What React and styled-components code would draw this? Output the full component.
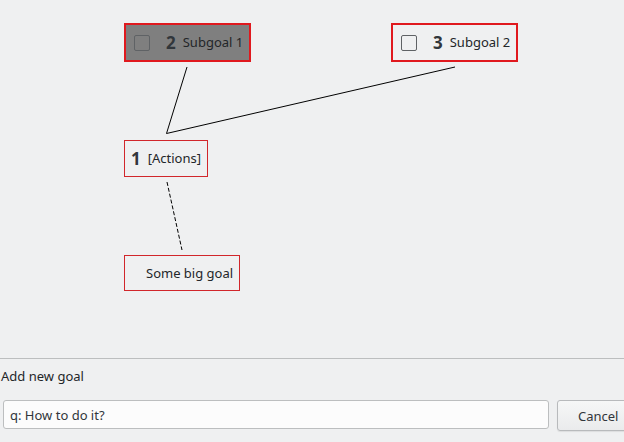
import React from "react";
import styled, { createGlobalStyle } from "styled-components";

const Global = createGlobalStyle`
  html, body { margin: 0; padding: 0; background: #eff0f1; }
  body { font-family: "Noto Sans", "Open Sans", sans-serif; color: #31363b; overflow: hidden; }
  * { box-sizing: border-box; }
`;

const Page = styled.div`
  width: 624px;
  height: 442px;
  display: flex;
  flex-direction: column;
  background: #eff0f1;
  overflow: hidden;
`;

const Canvas = styled.div`
  position: relative;
  height: 359px;
  flex: none;
  border-bottom: 1px solid #bcbebf;
`;

const Edges = styled.svg`
  position: absolute;
  left: 0;
  top: 0;
  width: 624px;
  height: 358px;
`;

const Node = styled.div`
  position: absolute;
  left: ${(p) => p.$x}px;
  top: ${(p) => p.$y}px;
  width: ${(p) => p.$w}px;
  height: ${(p) => p.$h}px;
  border: ${(p) => (p.$thick ? 2 : 1)}px solid ${(p) => (p.$thick ? "#e0191e" : "#d1262b")};
  background: ${(p) => (p.$selected ? "#7f7f7f" : "transparent")};
  display: flex;
  align-items: center;
  padding-left: ${(p) => p.$pad}px;
`;

const Check = styled.span`
  width: 16px;
  height: 16px;
  border: 1px solid #5f6265;
  border-radius: 2px;
  background: ${(p) => (p.$selected ? "#7f7f7f" : "#eff0f1")};
  margin-right: 16px;
  flex: none;
`;

const Num = styled.span`
  font-weight: 700;
  font-size: 17px;
  color: #31363b;
  margin-right: 7px;
  line-height: 1;
`;

const Label = styled.span`
  font-size: 13px;
  color: #232629;
  line-height: 1;
  white-space: nowrap;
`;

const Bottom = styled.div`
  display: flex;
  flex-direction: column;
  padding-top: 7px;
`;

const Caption = styled.div`
  font-size: 13px;
  color: #232629;
  padding-left: 1px;
  height: 20px;
  line-height: 20px;
`;

const Row = styled.div`
  display: flex;
  align-items: flex-start;
  gap: 8px;
  margin-top: 14px;
  padding-left: 3px;
`;

const Input = styled.div`
  width: 546px;
  height: 29px;
  flex: none;
  background: #fcfcfc;
  border: 1px solid #bcbebf;
  border-radius: 3px;
  display: flex;
  align-items: center;
  padding-left: 6px;
  font-size: 13px;
  color: #31363b;
`;

const Button = styled.div`
  width: 90px;
  height: 31px;
  flex: none;
  border: 1px solid #b8babc;
  border-radius: 3px;
  background: linear-gradient(#f6f7f7, #eaebec);
  box-shadow: 0 1px 1px rgba(0,0,0,0.08);
  display: flex;
  align-items: center;
  padding-left: 20px;
  font-size: 13px;
  color: #31363b;
`;

export default function App() {
  return (
    <Page>
      <Global />
      <Canvas>
        <Edges viewBox="0 0 624 358">
          <line x1="187" y1="67" x2="166.5" y2="133.5" stroke="#000" strokeWidth="1" />
          <line x1="455" y1="67" x2="166.5" y2="133.5" stroke="#000" strokeWidth="1" />
          <line x1="167" y1="182" x2="182" y2="250" stroke="#000" strokeWidth="1" strokeDasharray="4 2" />
        </Edges>
        <Node $x={124} $y={23} $w={127} $h={39} $thick $selected $pad={8}>
          <Check $selected />
          <Num>2</Num>
          <Label>Subgoal 1</Label>
        </Node>
        <Node $x={391} $y={23} $w={127} $h={39} $thick $pad={8}>
          <Check />
          <Num>3</Num>
          <Label>Subgoal 2</Label>
        </Node>
        <Node $x={124} $y={140} $w={84} $h={37} $pad={6}>
          <Num>1</Num>
          <Label>[Actions]</Label>
        </Node>
        <Node $x={124} $y={255} $w={116} $h={36} $pad={21}>
          <Label>Some big goal</Label>
        </Node>
      </Canvas>
      <Bottom>
        <Caption>Add new goal</Caption>
        <Row>
          <Input>q: How to do it?</Input>
          <Button>Cancel</Button>
        </Row>
      </Bottom>
    </Page>
  );
}
